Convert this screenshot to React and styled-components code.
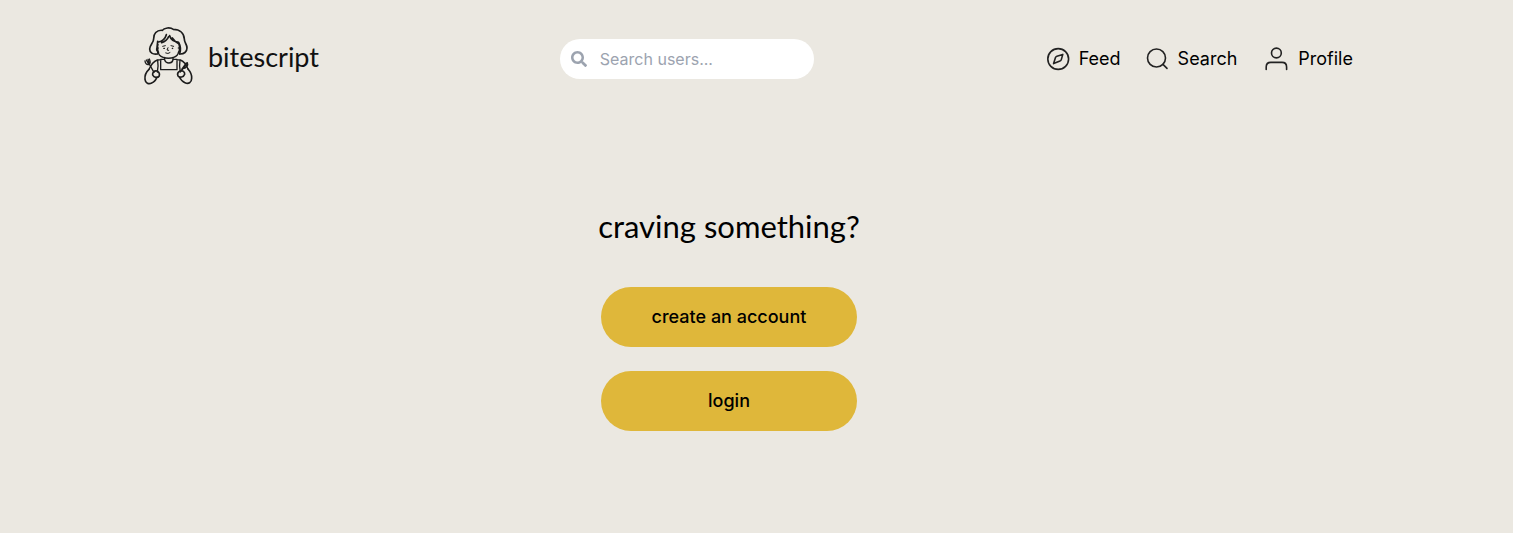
import React from "react";
import styled, { createGlobalStyle } from "styled-components";
import { FaSearch } from "react-icons/fa";

const GlobalStyle = createGlobalStyle`
  *, *::before, *::after { box-sizing: border-box; }
  body {
    margin: 0;
    min-height: 100vh;
    background: #ebe8e1;
    color: #000;
    font-family: Inter, sans-serif;
  }
`;

const displayFont = `Lato, cursive`;

const Header = styled.header`
  display: flex;
  flex-wrap: wrap;
  align-items: center;
  justify-content: space-between;
  gap: 16px;
  padding: 20px 160px 0 135px;
`;

const Brand = styled.a`
  display: flex;
  align-items: center;
  gap: 8px;
  min-width: 192px;
  color: #111;
  text-decoration: none;
`;

const Mascot = styled.svg`
  width: 65px;
  height: 78px;
  fill: none;
  stroke: #1c1c1c;
  stroke-width: 5;
  stroke-linecap: round;
  stroke-linejoin: round;
`;

const Wordmark = styled.span`
  font-family: ${displayFont};
  font-size: 27px;
  line-height: 36px;
  padding-bottom: 4px;
`;

const SearchBox = styled.label`
  display: flex;
  align-items: center;
  gap: 13px;
  width: 254px;
  height: 40px;
  padding: 0 16px 0 11px;
  border-radius: 20px;
  background: #fff;
  color: #9ca3af;

  svg {
    flex: none;
    width: 16px;
    height: 16px;
  }
`;

const SearchInput = styled.input`
  flex: 1;
  min-width: 0;
  padding: 0;
  border: 0;
  outline: 0;
  background: transparent;
  color: #111;
  font: 16px/24px Inter, sans-serif;

  &::placeholder {
    color: #9ca3af;
    opacity: 1;
  }
`;

const Nav = styled.nav`
  display: flex;
  align-items: center;
  gap: 25px;
`;

const NavLink = styled.a`
  display: flex;
  align-items: center;
  gap: 8px;
  color: #000;
  font-size: 18px;
  line-height: 28px;
  text-decoration: none;
`;

const NavIcon = styled.svg`
  width: ${({ $width }) => $width}px;
  height: 28px;
  fill: none;
  stroke: #222;
  stroke-width: 1.6;
  stroke-linecap: round;
  stroke-linejoin: round;
`;

const Main = styled.main`
  display: flex;
  flex-direction: column;
  align-items: center;
  padding: 104px 55px 40px 0;
`;

const Title = styled.h1`
  margin: 0 0 37px;
  font-family: ${displayFont};
  font-size: 31px;
  font-weight: 400;
  line-height: 48px;
`;

const Actions = styled.div`
  display: flex;
  flex-direction: column;
  gap: 24px;
  width: 256px;
`;

const Action = styled.button`
  height: 60px;
  border: 0;
  border-radius: 30px;
  background: #dfb73a;
  color: #000;
  font: 500 18px/28px Inter, sans-serif;
  cursor: pointer;
`;

function CookMascot() {
  return (
    <Mascot viewBox="0 0 195 234" aria-hidden="true">
      <path d="M82 31c5-8 24-10 33-3 20 0 32 12 33 29 0 12 8 15 8 27 0 11-9 19-22 18M82 31c-17-2-27 11-26 25 0 13-12 19-12 31 0 11 9 17 23 15" />
      <path d="M69 100c-3-11-4-24-1-36M134 101c4-12 3-23-3-34" />
      <path d="M70 66c12-2 21-11 24-22M80 68c10-3 17-9 21-18M104 47c3 10 11 17 24 19M112 54c6 9 12 14 19 17" />
      <path d="M69 73c-3 12-1 24 4 32 12 13 43 13 54 0 6-9 8-20 5-31" strokeWidth="4" />
      <path d="M70 84c-6-3-9 9 1 13M130 84c7-3 9 9 0 13" strokeWidth="4" />
      <path d="M83 79l8-2M108 77l8 2M99 83l-3 7 5 1M92 99q7 4 13-1" strokeWidth="3" />
      <circle cx="87" cy="85" r="1" strokeWidth="3" />
      <circle cx="112" cy="85" r="1" strokeWidth="3" />
      <path d="M89 112v8c4 12 22 12 25 0v-8" strokeWidth="4" />
      <path d="M77 118h11M114 118h12M77 118v31h49v-31M80 119l-13 1c-12 4-20 17-25 28M124 119l12 1c11 4 18 14 23 27" strokeWidth="4" />
      <path d="M68 121c2 12 2 22-1 35M135 121c-2 12-2 23 1 35" strokeWidth="4" />
      <path d="M42 148c-9 8-13 20-12 30 1 11 11 16 20 11 9-3 13-10 16-18M159 147c7 8 12 18 11 28 0 13-10 18-20 13-8-3-13-9-17-17" />
      <path d="M66 153c-9-2-14 5-13 12 4 8 15 10 19 4 3-7 0-13-6-16M135 153c8-3 15 3 14 10-3 9-15 11-20 5-3-7 0-12 6-15" />
      <path d="M57 157L41 129M30 123c1 9 6 12 12 10 6-3 4-9 1-16M34 120l6 10M39 118l3 11" strokeWidth="4" />
      <path d="M139 153l18-25c4 8-4 17-14 18M140 148l14-19" strokeWidth="4" />
    </Mascot>
  );
}

export default function App() {
  return (
    <>
      <GlobalStyle />
      <Header>
        <Brand href="#home">
          <CookMascot />
          <Wordmark>bitescript</Wordmark>
        </Brand>
        <SearchBox>
          <FaSearch aria-hidden="true" />
          <SearchInput type="text" placeholder="Search users..." aria-label="Search users" />
        </SearchBox>
        <Nav>
          <NavLink href="#feed">
            <NavIcon $width={24} viewBox="0 0 24 28" aria-hidden="true">
              <circle cx="11.2" cy="14" r="10.4" />
              <path d="M15.8 9.4l-1.5 5.2c-.2.7-.6 1.1-1.3 1.3l-6.4 2.7 1.9-6c.2-.7.7-1.2 1.4-1.4z" />
            </NavIcon>
            Feed
          </NavLink>
          <NavLink href="#search">
            <NavIcon $width={24} viewBox="0 0 24 28" aria-hidden="true">
              <circle cx="10.5" cy="13" r="9" />
              <path d="M17 19.4l4 4" />
            </NavIcon>
            Search
          </NavLink>
          <NavLink href="#profile">
            <NavIcon $width={28} viewBox="0 0 28 28" aria-hidden="true">
              <circle cx="14.4" cy="8" r="4.9" />
              <path d="M4.2 24.4v-2.4c0-3 1.8-4.6 4.6-4.6h11.2c2.8 0 4.6 1.6 4.6 4.6v2.4" />
            </NavIcon>
            Profile
          </NavLink>
        </Nav>
      </Header>
      <Main>
        <Title>craving something?</Title>
        <Actions>
          <Action type="button">create an account</Action>
          <Action type="button">login</Action>
        </Actions>
      </Main>
    </>
  );
}
